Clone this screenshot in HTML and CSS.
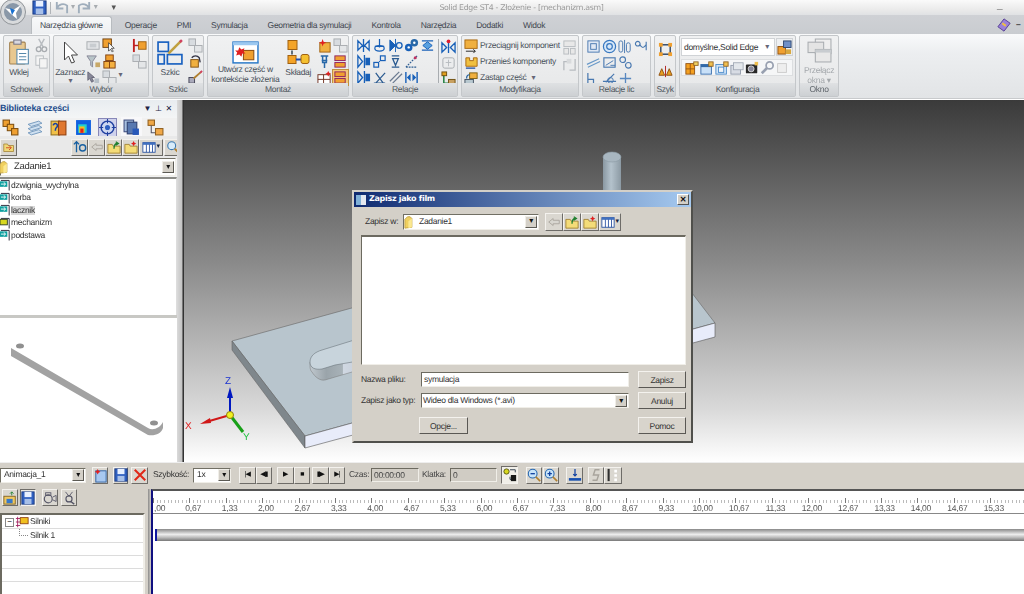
FILE: index.html
```html
<!DOCTYPE html>
<html lang="pl">
<head>
<meta charset="utf-8">
<title>Solid Edge ST4 - Złożenie - [mechanizm.asm]</title>
<link rel="stylesheet" href="styles.css">
</head>
<body>
<svg class="defs" width="0" height="0">
  <symbol id="clip" viewBox="0 0 20 26"><rect x="1" y="3" width="15" height="21" rx="1" fill="#e8c890" stroke="#a08050"/><rect x="5" y="1" width="7" height="4" fill="#d8d8e0" stroke="#778"/><rect x="8" y="10" width="11" height="14" fill="#fff" stroke="#58a"/><path d="M10 14h7M10 17h7M10 20h7" stroke="#58a"/></symbol>
  <symbol id="cut" viewBox="0 0 16 16"><path d="M5 1l5 9M11 1L6 10" stroke="#b8bcc0" stroke-width="1.5" fill="none"/><circle cx="5" cy="12" r="2.5" fill="none" stroke="#a8acb0" stroke-width="1.5"/><circle cx="11" cy="12" r="2.5" fill="none" stroke="#a8acb0" stroke-width="1.5"/></symbol>
  <symbol id="copy" viewBox="0 0 16 16"><rect x="2" y="2" width="8" height="10" fill="#f4f4f4" stroke="#b8bcc0"/><rect x="6" y="5" width="8" height="10" fill="#f4f4f4" stroke="#b8bcc0"/></symbol>
  <symbol id="cur" viewBox="0 0 16 24"><path d="M2 1v18l4-4 3 7 3-1-3-7h6z" fill="#fff" stroke="#444"/></symbol>
  <symbol id="gbox" viewBox="0 0 16 16"><rect x="1" y="4" width="13" height="8" fill="#e4e6e8" stroke="#a8acb0"/><rect x="4" y="6" width="7" height="4" fill="#c8ccd0"/></symbol>
  <symbol id="ocur" viewBox="0 0 16 16"><rect x="1" y="1" width="9" height="9" fill="#f0a030" stroke="#704010"/><path d="M7 5v9l2-2 2 3 1-1-2-3h3z" fill="#fff" stroke="#333" stroke-width=".8"/></symbol>
  <symbol id="funnel" viewBox="0 0 16 16"><path d="M1 2h10L7 8v6l-2-2V8z" fill="#b8c4c8" stroke="#889"/><rect x="10" y="9" width="5" height="5" fill="#c8a868"/></symbol>
  <symbol id="ostack" viewBox="0 0 16 16"><rect x="4" y="1" width="8" height="6" fill="#f0a030" stroke="#804010"/><rect x="2" y="8" width="12" height="7" fill="#f4b040" stroke="#804010"/><path d="M8 8v7" stroke="#804010"/></symbol>
  <symbol id="gcur" viewBox="0 0 16 16"><path d="M2 2v9l2-2 2 4 2-1-2-4h3z" fill="#889" stroke="#667"/><rect x="9" y="9" width="5" height="5" fill="#b8c0c8"/></symbol>
  <symbol id="gcube" viewBox="0 0 16 16"><rect x="1" y="1" width="7" height="7" fill="#d8dce0" stroke="#a8acb0"/><rect x="7" y="8" width="8" height="7" fill="#e4e6e8" stroke="#a8acb0"/></symbol>
  <symbol id="obar" viewBox="0 0 16 16"><path d="M2 1v14" stroke="#c02020" stroke-width="2"/><path d="M2 8h5" stroke="#c02020" stroke-width="1.5"/><rect x="7" y="4" width="8" height="8" fill="#f0a030" stroke="#a06010"/></symbol>
  <symbol id="sketch" viewBox="0 0 26 26"><rect x="1" y="3" width="10" height="9" fill="none" stroke="#1860c0" stroke-width="1.6"/><rect x="1" y="15" width="6" height="9" fill="none" stroke="#1860c0" stroke-width="1.6"/><rect x="10" y="15" width="14" height="9" fill="none" stroke="#1860c0" stroke-width="1.6"/><path d="M11 14L23 2" stroke="#c0a040" stroke-width="2.4"/><path d="M22 3l2-2" stroke="#d04060" stroke-width="2.4"/></symbol>
  <symbol id="orot" viewBox="0 0 16 16"><rect x="3" y="6" width="8" height="8" fill="#f0b040" stroke="#805010"/><path d="M4 4a5 5 0 0 1 8 0l1 5" fill="none" stroke="#334" stroke-width="1.4"/></symbol>
  <symbol id="pen" viewBox="0 0 16 16"><rect x="1" y="8" width="6" height="6" fill="#aab" stroke="#445"/><path d="M6 9l8-7" stroke="#b08030" stroke-width="2"/><path d="M13 3l2-2" stroke="#d04060" stroke-width="2"/></symbol>
  <symbol id="incontext" viewBox="0 0 26 22"><rect x="1" y="1" width="24" height="20" fill="#fff" stroke="#2878c8" stroke-width="1.4"/><rect x="1" y="1" width="24" height="3" fill="#9cc8f0"/><rect x="11" y="9" width="10" height="9" fill="#f0a030" stroke="#905010"/><path d="M7 6l2 2 3-1-1 3 2 2-3 0-1 3-2-2-3 1 1-3-2-2 3 0z" fill="#e02020"/></symbol>
  <symbol id="assemble" viewBox="0 0 24 26"><rect x="2" y="1" width="9" height="9" fill="#f4a428" stroke="#a06010"/><path d="M6 11v4" stroke="#345" stroke-width="1.5"/><rect x="2" y="16" width="8" height="8" fill="#f4a428" stroke="#a06010"/><path d="M10 20h5" stroke="#2050b0" stroke-width="2"/><rect x="15" y="15" width="8" height="9" rx="2" fill="#f4c030" stroke="#a06010"/></symbol>
  <symbol id="star" viewBox="0 0 16 16"><rect x="3" y="5" width="11" height="10" fill="#f0b040" stroke="#a06010"/><path d="M6 1l1 3 3 1-3 1-1 3-1-3-3-1 3-1z" fill="#e02020"/></symbol>
  <symbol id="pin" viewBox="0 0 16 16"><path d="M4 2h8M6 2v7h4V2M8 9v6M5 7h6" stroke="#2868a8" stroke-width="1.6" fill="none"/></symbol>
  <symbol id="gridstar" viewBox="0 0 16 16"><rect x="1" y="5" width="13" height="10" fill="#fff" stroke="#703020"/><path d="M7 5v10M1 10h13" stroke="#703020"/><path d="M12 1l1 2 2 1-2 1-1 2-1-2-2-1 2-1z" fill="#e02020"/></symbol>
  <symbol id="chain" viewBox="0 0 16 16"><rect x="2" y="2" width="11" height="5" fill="#f0a030" stroke="#902060"/><rect x="2" y="9" width="11" height="5" fill="#f0a030" stroke="#902060"/></symbol>
  <symbol id="rb1" viewBox="0 0 16 16"><path d="M2 3v10l5-5zM14 3v10l-5-5zM8 1v14" fill="none" stroke="#1860b8" stroke-width="1.4"/></symbol>
  <symbol id="rb2" viewBox="0 0 16 16"><path d="M8 1v9M3 9h10" stroke="#1860b8" stroke-width="1.3" fill="none"/><ellipse cx="8" cy="11" rx="5" ry="3" fill="none" stroke="#1860b8" stroke-width="1.3"/></symbol>
  <symbol id="rb3" viewBox="0 0 16 16"><path d="M2 2v12l6-6zM8 1v14" fill="#1860b8" stroke="#1860b8"/><circle cx="12" cy="8" r="3" fill="none" stroke="#1860b8" stroke-width="1.4"/></symbol>
  <symbol id="gear" viewBox="0 0 16 16"><circle cx="5" cy="10" r="4" fill="#1860b8"/><circle cx="11" cy="5" r="4" fill="#2868a8"/><circle cx="5" cy="10" r="1.3" fill="#fff"/><circle cx="11" cy="5" r="1.3" fill="#fff"/></symbol>
  <symbol id="rb5" viewBox="0 0 16 16"><path d="M2 3h12M2 13h12" stroke="#1860b8" stroke-width="1.4"/><path d="M3 8l5-4 5 4-5 4z" fill="#58a0e0" stroke="#1860b8"/></symbol>
  <symbol id="rb6" viewBox="0 0 16 16"><path d="M2 2v12l5-6zM9 1v14" fill="none" stroke="#1860b8" stroke-width="1.4"/><rect x="10" y="4" width="5" height="8" fill="#1860b8"/></symbol>
  <symbol id="rb7" viewBox="0 0 16 16"><rect x="2" y="9" width="5" height="5" fill="none" stroke="#1860b8" stroke-width="1.3"/><rect x="9" y="2" width="5" height="5" fill="none" stroke="#1860b8" stroke-width="1.3"/><path d="M7 9l2-2" stroke="#1860b8"/></symbol>
  <symbol id="rb8" viewBox="0 0 16 16"><path d="M4 2h8M4 14h8M5 5l3 7 3-7z" fill="none" stroke="#2a5a90" stroke-width="1.4"/></symbol>
  <symbol id="rb9" viewBox="0 0 16 16"><path d="M2 14L14 2M2 14h12" stroke="#2a5a90" stroke-width="1.2" stroke-dasharray="2 1"/><circle cx="12" cy="4" r="1.6" fill="#c03060"/></symbol>
  <symbol id="rb10" viewBox="0 0 16 16"><path d="M2 14h12M4 14L14 3M4 3l8 11" stroke="#2a5a90" stroke-width="1.3"/></symbol>
  <symbol id="rb11" viewBox="0 0 16 16"><path d="M2 12L12 2M5 14L15 4" stroke="#6a7a90" stroke-width="1.3"/></symbol>
  <symbol id="rb12" viewBox="0 0 16 16"><path d="M2 2v12M14 2v12" stroke="#1860b8" stroke-width="1.5"/><path d="M3 8l4-4v8zM13 8l-4-4v8z" fill="#1860b8"/></symbol>
  <symbol id="rred" viewBox="0 0 16 16"><path d="M1 4v10l5-5zM15 4v10l-5-5zM8 3v12" fill="none" stroke="#1860b8" stroke-width="1.4"/><circle cx="8" cy="2.5" r="2" fill="#e02030"/></symbol>
  <symbol id="gcal" viewBox="0 0 16 16"><rect x="2" y="3" width="12" height="11" rx="2" fill="none" stroke="#a8acb0"/><path d="M8 5v7M5 8h6" stroke="#b8bcc0"/></symbol>
  <symbol id="gtree" viewBox="0 0 16 16"><path d="M3 2v11h5" stroke="#208040" stroke-width="1.6" fill="none"/><rect x="1" y="1" width="5" height="4" fill="#e0a020" stroke="#705010"/><rect x="8" y="9" width="7" height="6" fill="#c8a060" stroke="#705010"/></symbol>
  <symbol id="drag" viewBox="0 0 16 16"><rect x="1" y="1" width="13" height="9" fill="#f0b040" stroke="#a86810"/><path d="M2 13h10l-2-2m2 2l-2 2" stroke="#222" fill="none"/></symbol>
  <symbol id="move" viewBox="0 0 16 16"><path d="M2 3h4v3h4V3h4v9H2z" fill="#f0c040" stroke="#a86810"/><path d="M2 14h10" stroke="#2050a0" stroke-width="1.4"/></symbol>
  <symbol id="replace" viewBox="0 0 16 16"><rect x="6" y="2" width="8" height="6" fill="#f0b040" stroke="#806010"/><rect x="1" y="9" width="9" height="6" fill="#b8c8d0" stroke="#405060"/><path d="M3 8a3 3 0 0 1 3-4" stroke="#2060a0" fill="none" stroke-width="1.3"/></symbol>
  <symbol id="gcomp" viewBox="0 0 16 16"><rect x="2" y="1" width="12" height="6" fill="#e8e8e8" stroke="#b8bcc0"/><rect x="2" y="9" width="5" height="6" fill="#e8e8e8" stroke="#b8bcc0"/><rect x="9" y="9" width="5" height="6" fill="#e8e8e8" stroke="#b8bcc0"/></symbol>
  <symbol id="gmv" viewBox="0 0 16 16"><path d="M2 14V5h4M14 2v12H8" stroke="#b8bcc0" fill="none" stroke-width="1.4"/><rect x="5" y="2" width="5" height="5" fill="#d8dadc"/></symbol>
  <symbol id="lb1" viewBox="0 0 16 16"><rect x="2" y="2" width="12" height="12" fill="#e0e8f4" stroke="#4878b0"/><rect x="5" y="5" width="6" height="6" fill="none" stroke="#4878b0"/></symbol>
  <symbol id="lb2" viewBox="0 0 16 16"><circle cx="8" cy="8" r="6.5" fill="#d8e8f8" stroke="#3878c0" stroke-width="1.3"/><circle cx="8" cy="8" r="3" fill="none" stroke="#3878c0" stroke-width="1.3"/></symbol>
  <symbol id="lb3" viewBox="0 0 16 16"><path d="M3 2a2 2 0 0 1 2 2v8a2 2 0 0 1-4 0V4a2 2 0 0 1 2-2zM11 4a2 2 0 0 1 2 2v6a2 2 0 0 1-4 0V6a2 2 0 0 1 2-2zM7 1v14" fill="none" stroke="#4878b0"/></symbol>
  <symbol id="lb4" viewBox="0 0 16 16"><circle cx="4" cy="5" r="2.5" fill="none" stroke="#4878b0" stroke-width="1.2"/><path d="M6 6c3 4 4 4 7 0M13 3v9" fill="none" stroke="#4878b0" stroke-width="1.2"/></symbol>
  <symbol id="lb5" viewBox="0 0 16 16"><path d="M1 10L14 4M2 13l13-6" stroke="#6898c8" stroke-width="1.2"/></symbol>
  <symbol id="lb6" viewBox="0 0 16 16"><rect x="2" y="3" width="12" height="10" fill="none" stroke="#4878b0" stroke-width="1.2"/><path d="M4 11l8-5M9 11h5" stroke="#4878b0"/></symbol>
  <symbol id="lb7" viewBox="0 0 16 16"><circle cx="5" cy="5" r="3" fill="none" stroke="#4878b0" stroke-width="1.2"/><circle cx="11" cy="11" r="3" fill="none" stroke="#4878b0" stroke-width="1.2"/></symbol>
  <symbol id="lb8" viewBox="0 0 16 16"><path d="M2 2v12h12M2 9h6v5" fill="none" stroke="#4878b0" stroke-width="1.3"/></symbol>
  <symbol id="lb9" viewBox="0 0 16 16"><path d="M1 11h14M13 3L4 12" stroke="#4878b0" stroke-width="1.2"/><circle cx="9" cy="10" r="3" fill="none" stroke="#4878b0"/></symbol>
  <symbol id="lb10" viewBox="0 0 16 16"><path d="M8 2v12M2 8h12" stroke="#5888c0" stroke-width="1.4"/></symbol>
  <symbol id="patsq" viewBox="0 0 16 16"><rect x="3" y="3" width="10" height="10" fill="none" stroke="#203858" stroke-width="1.4"/><rect x="1" y="1" width="4" height="4" fill="#f0a030"/><rect x="11" y="1" width="4" height="4" fill="#f0a030"/><rect x="1" y="11" width="4" height="4" fill="#f0a030"/><rect x="11" y="11" width="4" height="4" fill="#f0a030"/></symbol>
  <symbol id="mirror" viewBox="0 0 16 16"><path d="M8 2v12" stroke="#b02020"/><path d="M1 12l3-7 3 7zM9 12l3-7 3 7z" fill="#e8a020" stroke="#905010"/></symbol>
  <symbol id="cfg" viewBox="0 0 16 16"><rect x="1" y="7" width="8" height="8" fill="#f0a030" stroke="#905010"/><rect x="7" y="1" width="8" height="7" fill="#7090c8" stroke="#304870"/><rect x="9" y="10" width="6" height="5" fill="#d8a840"/></symbol>
  <symbol id="k1" viewBox="0 0 16 16"><rect x="1" y="3" width="10" height="12" fill="#f4a020" stroke="#905010"/><path d="M6 3v12M1 9h10" stroke="#905010"/><rect x="10" y="1" width="5" height="4" fill="#f0d060" stroke="#906020"/></symbol>
  <symbol id="k2" viewBox="0 0 16 16"><rect x="1" y="4" width="12" height="11" fill="#c8e0f8" stroke="#3068a8"/><rect x="1" y="4" width="12" height="3" fill="#3068a8"/><rect x="10" y="1" width="5" height="5" fill="#f0c050" stroke="#906020"/></symbol>
  <symbol id="k3" viewBox="0 0 16 16"><rect x="1" y="4" width="12" height="11" fill="#d0e4f8" stroke="#4888c8"/><rect x="4" y="7" width="6" height="6" fill="#f0f4f8" stroke="#4888c8"/><rect x="10" y="1" width="5" height="5" fill="#f0c050" stroke="#906020"/></symbol>
  <symbol id="k4" viewBox="0 0 16 16"><rect x="1" y="5" width="11" height="10" fill="#d8dce4" stroke="#9098a8"/><rect x="4" y="2" width="11" height="8" fill="#e4e8ec" stroke="#a0a8b4"/></symbol>
  <symbol id="k5" viewBox="0 0 16 16"><rect x="1" y="4" width="13" height="10" rx="1" fill="#282828"/><circle cx="7" cy="9" r="3.4" fill="#889" stroke="#ddd"/><rect x="11" y="1" width="4" height="4" fill="#f0c050"/></symbol>
  <symbol id="k6" viewBox="0 0 16 16"><circle cx="11" cy="5" r="4" fill="none" stroke="#98a0b0" stroke-width="2"/><path d="M8 8l-6 6" stroke="#98a0b0" stroke-width="3"/></symbol>
  <symbol id="k7" viewBox="0 0 16 16"><rect x="3" y="3" width="10" height="10" fill="#eee" stroke="#c8c8c8"/></symbol>
  <symbol id="win" viewBox="0 0 24 24"><rect x="8" y="1" width="15" height="14" fill="#eee" stroke="#a8acb0"/><rect x="1" y="4" width="15" height="10" fill="#e4e4e4" stroke="#a8acb0"/><rect x="8" y="11" width="15" height="12" fill="#e8e8e8" stroke="#a8acb0"/><rect x="8" y="11" width="15" height="3" fill="#c8ccd0"/></symbol>
  <symbol id="cascade" viewBox="0 0 16 16"><rect x="1" y="1" width="6" height="6" fill="#f0a030" stroke="#805010"/><rect x="5" y="5" width="6" height="6" fill="#f4b040" stroke="#805010"/><rect x="9" y="9" width="6" height="6" fill="#f0a030" stroke="#805010"/></symbol>
  <symbol id="sheets" viewBox="0 0 16 16"><path d="M2 5l10-3 3 2-10 3zM2 9l10-3 3 2-10 3zM2 13l10-3 3 2-10 3z" fill="#cfe0f0" stroke="#6890b8" stroke-width=".8"/></symbol>
  <symbol id="quest" viewBox="0 0 16 16"><rect x="1" y="2" width="8" height="13" fill="#f0c048" stroke="#907020"/><rect x="8" y="2" width="7" height="13" fill="#e07830" stroke="#904010"/><path d="M3 6a2 2 0 1 1 3 2c-1 1-1 1-1 3" stroke="#1840a0" fill="none" stroke-width="1.4"/></symbol>
  <symbol id="heat" viewBox="0 0 16 16"><rect x="1" y="1" width="14" height="14" fill="#1060e0"/><rect x="3" y="5" width="8" height="8" fill="#20d0d0"/><rect x="4" y="7" width="5" height="6" fill="#f0c020"/><rect x="5" y="9" width="3" height="4" fill="#e02020"/></symbol>
  <symbol id="target" viewBox="0 0 16 16"><circle cx="8" cy="8" r="6" fill="#cfd8f0" stroke="#2040a0" stroke-width="1.4"/><circle cx="8" cy="8" r="2.4" fill="#3060c0"/><path d="M8 0v4M8 12v4M0 8h4M12 8h4" stroke="#2040a0"/></symbol>
  <symbol id="docs" viewBox="0 0 16 16"><rect x="1" y="1" width="9" height="11" fill="#a8c0e0" stroke="#405080"/><rect x="4" y="3" width="9" height="11" fill="#5878b0" stroke="#304070"/><rect x="9" y="9" width="6" height="6" fill="#2858b8"/></symbol>
  <symbol id="otree" viewBox="0 0 16 16"><rect x="1" y="1" width="6" height="5" fill="#f0a848" stroke="#906020"/><path d="M4 6v7h4" stroke="#556" fill="none"/><rect x="8" y="9" width="7" height="6" fill="#f0a848" stroke="#906020"/></symbol>
  <symbol id="openf" viewBox="0 0 16 16"><path d="M1 4h5l1 2h7v8H1z" fill="#f0d878" stroke="#a08030"/><path d="M4 9h7m-3-3l3 3-3 3" stroke="#d03010" fill="none"/></symbol>
  <symbol id="info" viewBox="0 0 16 16"><path d="M4 2v12M1 5l3-3 3 3" stroke="#1860a0" stroke-width="1.5" fill="none"/><circle cx="11" cy="9" r="3.5" fill="none" stroke="#1860a0" stroke-width="1.6"/></symbol>
  <symbol id="back" viewBox="0 0 16 16"><path d="M2 8l5-4v2h7v4H7v2z" fill="#d8d6d0" stroke="#a8a49c"/></symbol>
  <symbol id="fup" viewBox="0 0 16 16"><path d="M1 5h5l1 2h8v8H1z" fill="#f4dc78" stroke="#a08030"/><path d="M8 10c0-4 2-6 4-6m-2-2l3 2-3 2" stroke="#208030" fill="none" stroke-width="1.5"/></symbol>
  <symbol id="fnew" viewBox="0 0 16 16"><path d="M1 5h5l1 2h8v8H1z" fill="#f4dc78" stroke="#a08030"/><path d="M11 1l1 2 2 1-2 1-1 2-1-2-2-1 2-1z" fill="#e02020"/></symbol>
  <symbol id="view" viewBox="0 0 16 16"><rect x="1" y="3" width="14" height="11" fill="#fff" stroke="#2850a0"/><rect x="1" y="3" width="14" height="2.5" fill="#4070c0"/><path d="M5 5v9M8.500 5v9M12 5v9" stroke="#2850a0"/></symbol>
  <symbol id="search" viewBox="0 0 16 16"><circle cx="6.500" cy="6.500" r="4.500" fill="#d8ecfa" stroke="#3878b0" stroke-width="1.2"/><path d="M10 10l5 5" stroke="#b08030" stroke-width="2.2"/></symbol>
  <symbol id="folder" viewBox="0 0 16 16"><path d="M1 15V5l3-3h3l2 2v10z" fill="#f0d060" stroke="#c0a040"/><path d="M5 15V7l4-3v10z" fill="#fbe890"/></symbol>
  <symbol id="part" viewBox="0 0 12 12"><path d="M1 1h9v11" fill="none" stroke="#223"/><rect x="0" y="2" width="8" height="6" fill="#10a0a0"/><path d="M1 5h5m-2-2l2 2-2 2" stroke="#fff" fill="none"/></symbol>
  <symbol id="asm" viewBox="0 0 12 12"><path d="M1 1h9v11" fill="none" stroke="#223"/><rect x="0" y="2" width="8" height="6" fill="#d8d820" stroke="#304020"/></symbol>
  <symbol id="motor" viewBox="0 0 16 16"><path d="M3 2v12M1 4h5M1 8h5M1 12h5" stroke="#a02060"/><rect x="6" y="3" width="9" height="7" fill="#f0c020" stroke="#904010"/></symbol>
  <symbol id="newanim" viewBox="0 0 16 16"><rect x="3" y="3" width="11" height="12" fill="#a8c8f0" stroke="#3060a0"/><path d="M5 1l1 2 2 1-2 1-1 2-1-2-2-1 2-1z" fill="#e02020"/></symbol>
  <symbol id="save" viewBox="0 0 16 16"><rect x="1" y="1" width="14" height="14" fill="#3060c0" stroke="#183880"/><rect x="4" y="1" width="8" height="6" fill="#e8f0ff"/><rect x="4" y="9" width="8" height="6" fill="#a8c0e8"/></symbol>
  <symbol id="del" viewBox="0 0 16 16"><path d="M2 2l12 12M14 2L2 14" stroke="#e02818" stroke-width="2.4"/></symbol>
  <symbol id="opena" viewBox="0 0 16 16"><rect x="1" y="6" width="13" height="9" fill="#f0c860" stroke="#806020"/><rect x="4" y="9" width="7" height="5" fill="#3878c8"/><path d="M10 1v4m-2-2l2-2 2 2" stroke="#208030" fill="none"/></symbol>
  <symbol id="filt" viewBox="0 0 16 16"><circle cx="6" cy="9" r="4.500" fill="none" stroke="#556" stroke-width="1.3"/><rect x="3" y="2" width="6" height="3" fill="none" stroke="#556"/><path d="M11 7l4-2v7l-4-2" fill="none" stroke="#556"/></symbol>
  <symbol id="filt2" viewBox="0 0 16 16"><path d="M4 1l4 5M12 1L8 6" stroke="#556"/><circle cx="8" cy="9" r="3.500" fill="none" stroke="#556" stroke-width="1.3"/><path d="M10 12l4 3" stroke="#556" stroke-width="1.6"/></symbol>
  <symbol id="ctrl" viewBox="0 0 16 16"><circle cx="4" cy="4" r="3" fill="#d8d820" stroke="#505010"/><path d="M8 2h6v3M14 13H8v-3" stroke="#203040" fill="none"/><rect x="9" y="8" width="6" height="7" fill="#181818"/></symbol>
  <symbol id="zminus" viewBox="0 0 16 16"><circle cx="6.500" cy="6.500" r="5" fill="#c8e4fa" stroke="#2868b0" stroke-width="1.2"/><path d="M4 6.500h5" stroke="#1040a0" stroke-width="1.5"/><path d="M10 10l5 5" stroke="#b08030" stroke-width="2"/></symbol>
  <symbol id="zplus" viewBox="0 0 16 16"><circle cx="6.500" cy="6.500" r="5" fill="#c8e4fa" stroke="#2868b0" stroke-width="1.2"/><path d="M4 6.500h5M6.500 4v5" stroke="#1040a0" stroke-width="1.5"/><path d="M10 10l5 5" stroke="#b08030" stroke-width="2"/></symbol>
  <symbol id="fit" viewBox="0 0 16 16"><path d="M8 1v8m-2-2l2 2 2-2" stroke="#1040a0" fill="none" stroke-width="1.4"/><path d="M1 13h14" stroke="#1850b0" stroke-width="3"/></symbol>
  <symbol id="gs" viewBox="0 0 16 16"><path d="M12 2H7L5 8h6l-2 6H4" fill="none" stroke="#a8a49c" stroke-width="1.6"/></symbol>
  <symbol id="gbar" viewBox="0 0 16 16"><path d="M3 1v14" stroke="#303030" stroke-width="2.4"/><path d="M11 2v3M11 7v3M11 12v3" stroke="#fff" stroke-width="3"/></symbol>
  <symbol id="undo" viewBox="0 0 16 16"><path d="M3 2v7h7M3 9a7 7 0 0 1 11-3v8" fill="none" stroke="#a0aebc" stroke-width="2"/></symbol>
  <symbol id="redo" viewBox="0 0 16 16"><path d="M13 2v7H6M13 9A7 7 0 0 0 2 6v8" fill="none" stroke="#a0aebc" stroke-width="2"/></symbol>
  <symbol id="help" viewBox="0 0 16 16"><path d="M8 1l7 5-7 9-7-5z" fill="#9a80d8" stroke="#503890"/><path d="M6 6l4 3" stroke="#f0c040" stroke-width="2.4"/></symbol>
  <linearGradient id="postgrad" x1="0" x2="1" y1="0" y2="0"><stop offset="0" stop-color="#8a98a2"/><stop offset=".45" stop-color="#b4c2cc"/><stop offset="1" stop-color="#8c9aa4"/></linearGradient>
  <linearGradient id="wallgrad" x1="0" x2="1" y1="0" y2="0"><stop offset="0" stop-color="#c0c8ce"/><stop offset=".3" stop-color="#9aa4aa"/><stop offset=".6" stop-color="#a8b2b8"/><stop offset=".62" stop-color="#d0d8e2"/><stop offset="1" stop-color="#c4ccd8"/></linearGradient>
</svg>

<div class="app">
  <header class="titlebar">
    <div class="logo"><svg viewBox="0 0 26 26" width="26" height="26"><circle cx="13" cy="13" r="12.500" fill="#d8dadc" stroke="#909498"/><circle cx="13" cy="13" r="9" fill="#8a98a8"/><path d="M5 9l8 2 8-5-5 8 1 6-6-5z" fill="#fff"/><path d="M10 9l5 2-3 5z" fill="#1870d0"/></svg></div>
    <div class="qat">
      <svg class="i16"><use href="#save"/></svg>
      <span class="qsep"></span>
      <svg class="i16"><use href="#undo"/></svg><span class="qcaret">▾</span>
      <svg class="i16"><use href="#redo"/></svg><span class="qcaret">▾</span>
      <span class="qmore">▾</span>
    </div>
    <div class="apptitle">Solid Edge ST4 - Złożenie - [mechanizm.asm]</div>
    <div class="winbtn">_</div>
  </header>

  <nav class="tabs">
    <span class="tab active">Narzędzia główne</span>
    <span class="tab first">Operacje</span>
    <span class="tab">PMI</span>
    <span class="tab">Symulacja</span>
    <span class="tab">Geometria dla symulacji</span>
    <span class="tab">Kontrola</span>
    <span class="tab">Narzędzia</span>
    <span class="tab">Dodatki</span>
    <span class="tab">Widok</span>
    <span class="tabend"><svg class="i13"><use href="#help"/></svg><span class="dash">–</span></span>
  </nav>

  <section class="ribbon">
    <div class="group g-clip">
      <div class="gbody">
        <div class="big w-wklej"><svg class="bigic s-clip"><use href="#clip"/></svg><span>Wklej</span></div>
        <div class="col"><svg class="i16"><use href="#cut"/></svg><svg class="i16"><use href="#copy"/></svg></div>
      </div>
      <div class="glabel">Schowek</div>
    </div>
    <div class="group g-sel">
      <div class="gbody">
        <div class="big w-zazn"><svg class="bigic s-cur"><use href="#cur"/></svg><span>Zaznacz</span><span class="caret">▾</span></div>
        <div class="col"><svg class="i16"><use href="#gbox"/></svg><svg class="i16"><use href="#funnel"/></svg><svg class="i16"><use href="#gcur"/></svg></div>
        <div class="col"><svg class="i16"><use href="#ocur"/></svg><svg class="i16"><use href="#ostack"/></svg><svg class="i16"><use href="#gcube"/></svg></div>
        <div class="col caretcol"><span class="caret">▾</span></div>
        <div class="col"><svg class="i16"><use href="#obar"/></svg><svg class="i16"><use href="#gcube"/></svg></div>
      </div>
      <div class="glabel">Wybór</div>
    </div>
    <div class="group g-sk">
      <div class="gbody">
        <div class="big w-szkic"><svg class="bigic s-sk"><use href="#sketch"/></svg><span>Szkic</span></div>
        <div class="col"><svg class="i16"><use href="#gcube"/></svg><svg class="i16"><use href="#orot"/></svg><svg class="i16"><use href="#pen"/></svg></div>
      </div>
      <div class="glabel">Szkic</div>
    </div>
    <div class="group g-mont">
      <div class="gbody">
        <div class="big w-ctx"><svg class="bigic s-ctx"><use href="#incontext"/></svg><span>Utwórz część w<br>kontekście złożenia</span></div>
        <div class="big w-skl"><svg class="bigic s-skl"><use href="#assemble"/></svg><span>Składaj</span></div>
        <div class="col"><svg class="i16"><use href="#star"/></svg><svg class="i16"><use href="#pin"/></svg><svg class="i16"><use href="#gridstar"/></svg></div>
        <div class="col"><svg class="i16"><use href="#gcube"/></svg><svg class="i16"><use href="#chain"/></svg><svg class="i16 hot"><use href="#chain"/></svg></div>
      </div>
      <div class="glabel">Montaż</div>
    </div>
    <div class="group g-rel">
      <div class="gbody relbody">
        <div class="relgrid">
          <svg class="i16"><use href="#rb1"/></svg><svg class="i16"><use href="#rb2"/></svg><svg class="i16"><use href="#rb3"/></svg><svg class="i16"><use href="#gear"/></svg><svg class="i16"><use href="#rb5"/></svg>
          <svg class="i16"><use href="#rb6"/></svg><svg class="i16"><use href="#rb7"/></svg><svg class="i16"><use href="#rb8"/></svg><svg class="i16"><use href="#rb9"/></svg><span></span>
          <svg class="i16"><use href="#rb6"/></svg><svg class="i16"><use href="#rb10"/></svg><svg class="i16"><use href="#rb11"/></svg><svg class="i16"><use href="#rb12"/></svg><span></span>
        </div>
        <span class="vsep"></span>
        <div class="col"><svg class="i16"><use href="#rred"/></svg><svg class="i16"><use href="#gcal"/></svg><svg class="i16"><use href="#gtree"/></svg></div>
      </div>
      <div class="glabel">Relacje</div>
    </div>
    <div class="group g-mod">
      <div class="gbody modbody">
        <div class="modrows">
          <div class="modrow"><svg class="i16"><use href="#drag"/></svg>Przeciągnij komponent</div>
          <div class="modrow"><svg class="i16"><use href="#move"/></svg>Przenieś komponenty</div>
          <div class="modrow"><svg class="i16"><use href="#replace"/></svg>Zastąp część <span class="caret">▾</span></div>
        </div>
        <div class="col"><svg class="i16"><use href="#gcomp"/></svg><svg class="i16"><use href="#gmv"/></svg></div>
      </div>
      <div class="glabel">Modyfikacja</div>
    </div>
    <div class="group g-lic">
      <div class="gbody licgrid">
        <svg class="i16"><use href="#lb1"/></svg><svg class="i16"><use href="#lb2"/></svg><svg class="i16"><use href="#lb3"/></svg><svg class="i16"><use href="#lb4"/></svg>
        <svg class="i16"><use href="#lb5"/></svg><svg class="i16"><use href="#lb6"/></svg><svg class="i16"><use href="#lb7"/></svg><span></span>
        <svg class="i16"><use href="#lb8"/></svg><svg class="i16"><use href="#lb9"/></svg><svg class="i16"><use href="#lb10"/></svg><span></span>
      </div>
      <div class="glabel">Relacje lic</div>
    </div>
    <div class="group g-szyk">
      <div class="gbody szykbody"><svg class="i16"><use href="#patsq"/></svg><svg class="i16"><use href="#mirror"/></svg></div>
      <div class="glabel">Szyk</div>
    </div>
    <div class="group g-konf">
      <div class="gbody konfbody">
        <div class="konfrow"><div class="konfcombo">domyślne,Solid Edge<span class="caret">▾</span></div><span class="konfbtn"><svg class="i16"><use href="#cfg"/></svg></span></div>
        <div class="konfbar">
          <svg class="i16"><use href="#k1"/></svg><svg class="i16"><use href="#k2"/></svg><svg class="i16"><use href="#k3"/></svg><svg class="i16"><use href="#k4"/></svg><svg class="i16"><use href="#k5"/></svg><svg class="i16"><use href="#k6"/></svg><svg class="i16"><use href="#k7"/></svg>
        </div>
      </div>
      <div class="glabel">Konfiguracja</div>
    </div>
    <div class="group g-okno">
      <div class="gbody">
        <div class="big w-okno"><svg class="bigic s-win"><use href="#win"/></svg><span>Przełącz<br>okna ▾</span></div>
      </div>
      <div class="glabel">Okno</div>
    </div>
  </section>

  <main class="main">
    <aside class="library">
      <div class="libhead"><span class="libtitle">Biblioteka części</span><span class="libctl">▼&nbsp; ⊥&nbsp; ✕</span></div>
      <div class="libicons">
        <svg class="i18"><use href="#cascade"/></svg><svg class="i18"><use href="#sheets"/></svg><svg class="i18"><use href="#quest"/></svg><svg class="i18"><use href="#heat"/></svg><span class="libact"><svg class="i18"><use href="#target"/></svg></span><span class="libsel"><svg class="i18"><use href="#docs"/></svg></span><svg class="i18"><use href="#otree"/></svg>
      </div>
      <div class="libtools">
        <span class="tbtn t-open"><svg class="i12"><use href="#openf"/></svg></span>
        <span class="toolgroup">
          <span class="tbtn"><svg class="i14"><use href="#info"/></svg></span><span class="tbtn"><svg class="i14"><use href="#back"/></svg></span><span class="tbtn"><svg class="i14"><use href="#fup"/></svg></span><span class="tbtn"><svg class="i14"><use href="#fnew"/></svg></span><span class="tbtn wide"><svg class="i14"><use href="#view"/></svg><span class="tcaret">▾</span></span>
        </span>
        <span class="tbtn t-search"><svg class="i14"><use href="#search"/></svg></span>
      </div>
      <div class="libcombo combo"><svg class="i14"><use href="#folder"/></svg><span class="combotext">Zadanie1</span><span class="ddbtn">▾</span></div>
      <ul class="parts">
        <li><svg class="i12"><use href="#part"/></svg>dzwignia_wychylna</li>
        <li><svg class="i12"><use href="#part"/></svg>korba</li>
        <li class="sel"><svg class="i12"><use href="#part"/></svg><span>lacznik</span></li>
        <li><svg class="i12"><use href="#asm"/></svg>mechanizm</li>
        <li><svg class="i12"><use href="#part"/></svg>podstawa</li>
      </ul>
      <div class="preview">
        <svg viewBox="0 0 177 144" width="177" height="144">
          <path d="M11 30L148 110c5 3 12 0 15-6v6c-2 6-8 8-15 7L11 38z" fill="#a2a2a2"/>
          <ellipse cx="20" cy="28" rx="4" ry="2.500" fill="#909090"/>
          <ellipse cx="154" cy="105" rx="4" ry="2.500" fill="#909090"/>
        </svg>
      </div>
    </aside>
    <div class="vsplit"></div>
    <div class="viewport">
      <svg class="scene" viewBox="0 0 840 362" width="840" height="362">
        <path d="M419 57v38h18V57z" fill="url(#postgrad)"/>
        <ellipse cx="428" cy="57" rx="9" ry="5" fill="#a8b6c0" stroke="#8a98a2" stroke-width=".6"/>
        <path d="M415 92h26v6h-26z" fill="#a4aeb4"/>
        <path d="M48 241L458 128 531 223 121 336z" fill="#b8c5cd" stroke="#666" stroke-width=".6"/>
        <path d="M48 241L121 336V348L48 250z" fill="#7f878c" stroke="#666" stroke-width=".6"/>
        <path d="M121 336L531 223V237L121 348z" fill="#e8ecfa" stroke="#555" stroke-width=".6"/>
        <path d="M126 262c0 6 0 8 2 10 3 5 8 9 13 8l27-8h12v-20l-42 8z" fill="url(#wallgrad)" stroke="#777" stroke-width=".5"/>
        <path d="M126 262c0-6 5-10 12-12l42-13v23l-29 5-13 4c-7 1-12-1-12-7z" fill="#c8d4dc" stroke="#6c767c" stroke-width=".6"/>
      </svg>
      <svg class="triad" viewBox="0 0 70 76" width="70" height="76">
        <path d="M46 48V26" stroke="#0018c0" stroke-width="2"/><path d="M46 20l-3 11h6z" fill="#0018c0"/>
        <path d="M46 48L22 55" stroke="#d01818" stroke-width="2"/><path d="M16 57l10-6 1 5z" fill="#d01818"/>
        <path d="M46 48l13 17" stroke="#18a018" stroke-width="3"/>
        <circle cx="46" cy="48" r="3.500" fill="#f0f020" stroke="#908010"/>
        <text x="41" y="17" class="tz">Z</text><text x="1" y="62" class="tx">X</text><text x="59" y="73" class="ty">Y</text>
      </svg>
    </div>

    <div class="dialog">
      <div class="dlgtitle"><span class="dlgicon"></span><span class="dlgname">Zapisz jako film</span><span class="dlgclose">✕</span></div>
      <div class="dlgtop">
        <label class="lblw">Zapisz w:</label>
        <div class="combo dlgcombo"><svg class="i14"><use href="#folder"/></svg><span class="combotext">Zadanie1</span><span class="ddbtn">▾</span></div>
        <span class="dlgtools">
          <span class="tbtn"><svg class="i14"><use href="#back"/></svg></span><span class="tbtn"><svg class="i14"><use href="#fup"/></svg></span><span class="tbtn"><svg class="i14"><use href="#fnew"/></svg></span><span class="tbtn wide"><svg class="i14"><use href="#view"/></svg><span class="tcaret">▾</span></span>
        </span>
      </div>
      <div class="filelist"></div>
      <div class="dlgform">
        <label>Nazwa pliku:</label><div class="field">symulacja</div><button class="btn" type="button">Zapisz</button>
        <label>Zapisz jako typ:</label><div class="field tight">Wideo dla Windows (*.avi)<span class="ddbtn">▾</span></div><button class="btn" type="button">Anuluj</button>
        <span></span><div class="optrow"><button class="btn opt" type="button">Opcje...</button></div><button class="btn" type="button">Pomoc</button>
      </div>
    </div>
  </main>

  <section class="anim">
    <div class="animbar">
      <div class="combo animcombo"><span class="combotext">Animacja_1</span><span class="ddbtn">▾</span></div>
      <span class="tbtn a1"><svg class="i16"><use href="#newanim"/></svg></span><span class="tbtn a2"><svg class="i14"><use href="#save"/></svg></span><span class="tbtn a3"><svg class="i14"><use href="#del"/></svg></span>
      <label class="speedlbl">Szybkość:</label>
      <div class="combo speedcombo"><span class="combotext">1x</span><span class="ddbtn">▾</span></div>
      <span class="player">
        <span class="pgrp"><span class="pbtn">|◀</span><span class="pbtn">◀▮</span></span>
        <span class="pgrp"><span class="pbtn">▶</span><span class="pbtn">■</span></span>
        <span class="pgrp"><span class="pbtn">▮▶</span><span class="pbtn">▶|</span></span>
      </span>
      <label class="czas">Czas:</label><div class="ro rotime">00:00:00</div>
      <label class="klatka">Klatka:</label><div class="ro roframe">0</div>
      <span class="tbtn pressed"><svg class="i14"><use href="#ctrl"/></svg></span>
      <span class="tbtn z1"><svg class="i14"><use href="#zminus"/></svg></span><span class="tbtn z1b"><svg class="i14"><use href="#zplus"/></svg></span>
      <span class="tbtn z2"><svg class="i14"><use href="#fit"/></svg></span>
      <span class="tbtn z3"><svg class="i14"><use href="#gs"/></svg></span><span class="tbtn z4"><svg class="i14"><use href="#gbar"/></svg></span>
    </div>
    <div class="animbody">
      <div class="animleft">
        <div class="animtools">
          <span class="tbtn b"><svg class="i14"><use href="#opena"/></svg></span><span class="tbtn b pressedb"><svg class="i14"><use href="#save"/></svg></span><span class="tbtn b g"><svg class="i14"><use href="#filt"/></svg></span><span class="tbtn b"><svg class="i14"><use href="#filt2"/></svg></span>
        </div>
        <div class="tree">
          <div class="trow"><span class="minus">−</span><svg class="i14"><use href="#motor"/></svg><span>Silniki</span></div>
          <div class="trow child"><span class="elbow"></span><span>Silnik 1</span></div>
          <div class="trow"></div><div class="trow"></div><div class="trow"></div>
        </div>
      </div>
      <div class="vsplit2"></div>
      <div class="timeline">
        <div class="ruler">
          <div class="ticks"></div>
          <div class="labels">
            <span class="l0">,00</span><span>0,67</span><span>1,33</span><span>2,00</span><span>2,67</span><span>3,33</span><span>4,00</span><span>4,67</span><span>5,33</span><span>6,00</span><span>6,67</span><span>7,33</span><span>8,00</span><span>8,67</span><span>9,33</span><span>10,00</span><span>10,67</span><span>11,33</span><span>12,00</span><span>12,67</span><span>13,33</span><span>14,00</span><span>14,67</span><span>15,33</span>
          </div>
        </div>
        <div class="tracks">
          <div class="track"></div>
          <div class="track"><div class="bar"></div></div>
        </div>
      </div>
    </div>
  </section>
</div>
</body>
</html>
```
FILE: styles.css
```css
* { box-sizing: border-box; }
html, body { margin: 0; height: 100%; overflow: hidden; background: #fff; }
body { font: 8.5px/1.1 "Liberation Sans", Arial, sans-serif; letter-spacing: -.3px; color: #333; text-rendering: geometricPrecision; }
.defs { position: absolute; }
.app { width: 1024px; height: 594px; display: flex; flex-direction: column; overflow: hidden; position: relative; filter: blur(.3px); }
svg { display: block; flex: none; }
.i12 { width: 12px; height: 12px; }
.i13 { width: 14px; height: 14px; }
.i14 { width: 14px; height: 14px; }
.i16 { width: 15px; height: 15px; }
.i18 { width: 17px; height: 17px; }

/* title */
.titlebar { height: 15px; display: flex; background: linear-gradient(#fafafa, #e9e9e9 70%, #e0e2e4); position: relative; }
.logo { position: absolute; left: 0; top: -1px; z-index: 3; }
.qat { display: flex; align-items: center; margin-left: 32px; gap: 2px; width: 165px; height: 15px; }
.qsep { width: 1px; height: 12px; background: #b0b4b8; margin: 0 1px; }
.qcaret { color: #a8acb0; font-size: 8px; margin: 0; }
.qmore { margin-left: 12px; font-size: 9px; color: #555; }
.apptitle { flex: 1; text-align: center; color: #9a9a9a; font-family: "DejaVu Sans", sans-serif; font-size: 7.8px; line-height: 15px; padding-right: 164px; padding-left: 14px; white-space: nowrap; }
.winbtn { width: 28px; color: #777; line-height: 12px; font-size: 10px; padding-left: 1px; }

/* tabs */
.tabs { height: 19px; display: flex; align-items: flex-end; background: linear-gradient(#cfd1d5, #c9ccd0); padding-left: 31px; color: #3f4650; position: relative; }
.tab { height: 17px; line-height: 16px; padding: 0 10px; white-space: nowrap; }
.tab.active { background: linear-gradient(#f8f9fa, #eef0f2); padding: 0 8px; border-radius: 3px 3px 0 0; border: 1px solid #b8bcc0; border-bottom: 0; height: 18px; margin-right: 3px; }
.tabend { margin-left: auto; display: flex; align-items: center; gap: 5px; height: 19px; width: 27px; }
.dash { font-weight: bold; color: #333; }

/* ribbon */
.ribbon { height: 65px; display: flex; gap: 3px; padding: 1px 0 1px 3px; background: linear-gradient(#f9fafb, #eceef0 30%, #e2e4e6); border-bottom: 1px solid #c8cacc; }
.group { display: flex; flex-direction: column; border: 1px solid #c4c7ca; border-radius: 2px; background: linear-gradient(#f0f1f2, #e6e7e8); }
.gbody { flex: 1; display: flex; min-height: 0; }
.glabel { height: 13px; line-height: 13px; text-align: center; background: linear-gradient(#dfe1e3, #cdd0d3); color: #4e555c; white-space: nowrap; }
.g-clip { width: 47px; } .g-sel { width: 96px; } .g-sk { width: 52px; } .g-mont { width: 142px; }
.g-rel { width: 106px; } .g-mod { width: 118px; } .g-lic { width: 69px; } .g-szyk { width: 22px; }
.g-konf { width: 117px; } .g-okno { width: 40px; }
.big { display: flex; flex-direction: column; align-items: center; text-align: center; color: #48505a; white-space: nowrap; line-height: 9px; }
.big span { display: block; }
.bigic { margin: 4px 0 3px; }
.caret { font-size: 8px; color: #667; line-height: 8px; }
.col { display: flex; flex-direction: column; gap: 1px; padding-top: 2px; }
.w-wklej { width: 33px; } .s-clip { width: 22px; height: 27px; margin-top: 3px; margin-bottom: 2px; }
.w-zazn { width: 37px; } .s-cur { width: 17px; height: 24px; margin-bottom: 3px; margin-top: 5px; }
.g-sel .col { margin-right: 1px; }
.caretcol { width: 12px; justify-content: flex-end; padding-bottom: 4px; }
.g-sel .col:last-child { margin-left: 2px; }
.w-szkic { width: 34px; } .s-sk { width: 27px; height: 27px; margin-top: 3px; margin-bottom: 2px; }
.g-sk .col { margin-left: 1px; }
.w-ctx { width: 78px; padding-left: 1px; line-height: 9.5px; } .s-ctx { width: 27px; height: 23px; margin-bottom: 1px; margin-top: 5px; }
.w-skl { width: 33px; margin-left: 1px; } .s-skl { width: 24px; height: 27px; margin-top: 3px; margin-bottom: 2px; }
.g-mont .col { margin-left: 1px; width: 16px; }
.g-mont .col:nth-child(3) { margin-left: 3px; }
.hot { background: #f4c878; outline: 1px solid #c09040; }
.relbody { padding: 1px 0 0 2px; }
.relgrid { display: grid; grid-template-columns: repeat(5, 16px); grid-auto-rows: 16px; align-items: center; justify-items: center; width: 81px; }
.vsep { width: 1px; height: 46px; margin: 2px 0 0 2px; background: #a8acb0; }
.g-rel .col { margin-left: 2px; }
.modbody { padding: 2px 0 0 2px; justify-content: space-between; }
.modrow { display: flex; align-items: center; gap: 1px; height: 16px; white-space: nowrap; color: #48505a; }
.modrows .caret { margin-left: 4px; }
.g-mod .col { margin-right: 1px; gap: 2px; }
.licgrid { display: grid; grid-template-columns: repeat(4, 16px); grid-auto-rows: 16px; padding: 2px 0 0 2px; align-items: center; justify-items: center; }
.szykbody { flex-direction: column; align-items: center; gap: 7px; padding-top: 6px; }
.konfbody { flex-direction: column; padding: 2px 2px 0 1px; gap: 3px; }
.konfrow { display: flex; gap: 1px; height: 18px; }
.konfcombo { flex: 1; background: #fff; border: 1px solid #d0d3d6; line-height: 16px; padding: 0 5px 0 2px; color: #333; display: flex; justify-content: space-between; white-space: nowrap; align-items: center; }
.konfbtn { width: 17px; display: flex; align-items: center; justify-content: center; background: #eef0f2; border: 1px solid #d0d3d6; }
.konfbar { display: flex; justify-content: space-between; background: #f5f6f7; border: 1px solid #dcdee0; padding: 0 3px; height: 17px; align-items: center; }
.konfbar svg { width: 14px; height: 14px; }
.w-okno { width: 38px; color: #a4a8ac; line-height: 10px; } .s-win { width: 25px; height: 25px; margin-top: 2px; margin-bottom: 2px; }
.g-okno .glabel { color: #60666c; }

/* main */
.main { height: 362px; display: flex; position: relative; margin-top: 1px; }
.library { width: 177px; display: flex; flex-direction: column; background: #f1f1f1; }
.libhead { height: 18px; flex: none; display: flex; justify-content: space-between; align-items: center; padding: 0 5px 0 0; background: linear-gradient(#e8ecf0, #f4f5f6); }
.libtitle { font-weight: bold; color: #1c4c8c; font-size: 9px; white-space: nowrap; letter-spacing: -.2px; }
.libctl { color: #224; font-size: 8px; white-space: nowrap; }
.libicons { display: grid; grid-template-columns: repeat(7, 24.3px); height: 18px; flex: none; justify-items: center; align-items: center; margin-left: -2px; }
.libact { background: #cfd2ec; outline: 1px solid #8888b8; }
.libsel { background: #f8f8fa; outline: 2px solid #f8f8fa; }
.libtools { height: 22px; flex: none; display: flex; align-items: center; background: #e9e9e9; }
.t-open { margin-right: 54px; width: 14px; }
.toolgroup { display: flex; }
.t-search { margin-left: 1px; width: 16px; }
.tbtn { width: 17px; height: 17px; display: inline-flex; align-items: center; justify-content: center; background: #dad7d0; border: 1px solid; border-color: #f4f2ee #6e6c68 #6e6c68 #f4f2ee; flex: none; }
.tbtn.wide { width: 24px; }
.tcaret { font-size: 7px; color: #124; }
.combo { display: flex; align-items: center; background: #fff; border: 1px solid; border-color: #716f64 #f0eee8 #f0eee8 #716f64; }
.combotext { flex: 1; padding-left: 3px; color: #333; white-space: nowrap; }
.ddbtn { width: 12px; height: 12px; display: flex; align-items: center; justify-content: center; background: #d4d0c8; border: 1px solid; border-color: #f0eee8 #5c5a54 #5c5a54 #f0eee8; font-size: 8px; color: #111; flex: none; margin-right: 1px; }
.libcombo { height: 18px; flex: none; margin-right: 1px; }
.libcombo svg { margin-left: -2px; }
.libcombo .combotext { padding-left: 1px; font-size: 9.5px; }
.parts { list-style: none; margin: 1px 0 0; padding: 0; height: 138px; flex: none; background: #fff; border-top: 2px solid #8c8c88; border-right: 1px solid #ddd; }
.parts li { display: flex; align-items: center; height: 12.5px; color: #333; white-space: nowrap; }
.parts li svg { width: 11px; }
.parts .sel span { background: #d8d8d8; }
.preview { flex: 1; background: #fff; border-top: 3px solid #c8c8c4; }
.vsplit { width: 7px; background: linear-gradient(90deg, #dadada, #c4c4c4 70%, #333 86%); }
.viewport { flex: 1; position: relative; background: linear-gradient(#3a3a3a, #8a8a8a 45%, #d8d8d8 85%, #fff); overflow: hidden; }
.scene { position: absolute; left: 0; top: 0; }
.triad { position: absolute; left: 0; top: 267px; }
.tz { fill: #1830d0; font: 10px "Liberation Sans", sans-serif; }
.tx { fill: #e02020; font: 10px "Liberation Sans", sans-serif; }
.ty { fill: #20c040; font: 10px "Liberation Sans", sans-serif; }

/* dialog */
.dialog { position: absolute; left: 352px; top: 90px; width: 341px; height: 253px; background: #d4d0c8; border: 2px solid; border-color: #d4d0c8 #50504c #50504c #d4d0c8; display: flex; flex-direction: column; }
.dlgtitle { height: 15px; flex: none; display: flex; align-items: center; background: linear-gradient(90deg, #0f2a70, #a6caf0); color: #fff; padding: 0 1px 0 2px; font-weight: bold; font-size: 8px; font-family: "DejaVu Sans", sans-serif; }
.dlgicon { width: 10px; height: 10px; background: linear-gradient(90deg, #7fb0d8 50%, #e4e8f0 50%); margin-right: 3px; }
.dlgname { flex: 1; }
.dlgclose { width: 12px; height: 11px; background: #d4d0c8; color: #111; font-size: 8px; line-height: 9px; text-align: center; border: 1px solid; border-color: #fff #555 #555 #fff; font-family: "Liberation Sans", sans-serif; margin-right: 1px; }
.dlgtop { height: 26px; flex: none; display: flex; align-items: center; padding: 3px 0 0 11px; }
.lblw { width: 38px; flex: none; color: #333; white-space: nowrap; }
.dlgcombo { width: 136px; height: 16px; flex: none; }
.dlgcombo .combotext { padding-left: 1px; }
.dlgtools { display: flex; margin-left: 6px; }
.dlgtools .tbtn { width: 18px; height: 18px; }
.dlgtools .tbtn.wide { width: 22px; }
.filelist { height: 130px; flex: none; margin: 2px 5px 0 7px; background: #fff; border: 1px solid; border-color: #6c6a60 #f0eee8 #f0eee8 #6c6a60; border-width: 2px 1px 1px 1px; }
.dlgform { display: grid; grid-template-columns: 60px 208px 57px; grid-template-rows: 21px 21px 29px; padding: 4px 0 0 7px; align-items: center; }
.dlgform label { color: #333; white-space: nowrap; }
.field { height: 15px; background: #fff; border: 1px solid; border-color: #6c6a60 #f0eee8 #f0eee8 #6c6a60; line-height: 13px; padding-left: 2px; color: #333; display: flex; justify-content: space-between; align-items: center; width: 208px; }
.field.tight { padding-left: 1px; }
.dlgform .btn { margin-left: 9px; }
.btn { width: 48px; height: 17px; background: #d8d4cc; font: 8.5px "Liberation Sans", sans-serif; letter-spacing: -.3px; color: #333; border: 1px solid; border-color: #f4f2ee #5a5854 #5a5854 #f4f2ee; padding: 0; text-rendering: geometricPrecision; }
.dlgform .btn.opt { margin-left: -2px; width: 49px; }

/* animation */
.anim { flex: 1; background: #d4d0c8; display: flex; flex-direction: column; }
.animbar { height: 27px; flex: none; display: flex; align-items: center; padding-bottom: 2px; border-top: 1px solid #eee; }
.animcombo { width: 86px; height: 15px; margin-right: 6px; flex: none; }
.a1 { width: 16px; }
.a2 { width: 15px; margin-left: 5px; }
.a3 { width: 17px; margin-left: 3px; }
.speedlbl { margin-left: 5px; width: 36px; flex: none; color: #333; white-space: nowrap; }
.speedcombo { width: 38px; height: 15px; flex: none; margin-left: 4px; }
.speedcombo .ddbtn { margin-right: 0; }
.player { display: flex; margin-left: 8px; }
.pgrp { display: flex; margin-right: 5px; }
.pgrp:nth-child(2) { margin-right: 2px; }
.pgrp:last-child { margin-right: 0; }
.pbtn { width: 16.5px; height: 17px; display: flex; align-items: center; justify-content: center; font-size: 7px; color: #111; background: #d8d4cc; border: 1px solid; border-color: #f4f2ee #6e6c68 #6e6c68 #f4f2ee; letter-spacing: -1px; }
.czas { margin-left: 4px; width: 22px; flex: none; color: #444; }
.ro { height: 14px; background: #d0ccc4; border: 1px solid; border-color: #6c6a60 #f0eee8 #f0eee8 #6c6a60; line-height: 12px; padding-left: 2px; color: #444; flex: none; }
.rotime { width: 48px; }
.klatka { margin-left: 3px; width: 28px; flex: none; color: #444; }
.roframe { width: 47px; }
.tbtn.pressed { background: #f1efe9; border-color: #6e6c68 #f4f2ee #f4f2ee #6e6c68; width: 17px; height: 18px; margin-left: 4px; }
.z1 { margin-left: 8px; width: 16px; }
.z1b { margin-left: 1px; width: 16px; }
.z2 { margin-left: 7px; width: 17px; }
.z3 { margin-left: 5px; width: 16px; }
.z4 { width: 18px; }
.animbody { flex: 1; display: flex; min-height: 0; }
.animleft { width: 145px; display: flex; flex-direction: column; }
.animtools { height: 24px; flex: none; display: flex; align-items: flex-start; padding-left: 2px; gap: 1px; }
.tbtn.b { width: 16px; height: 17px; }
.tbtn.pressedb { background: #ece9e2; border-color: #6e6c68 #f4f2ee #f4f2ee #6e6c68; margin-left: 1px; }
.tbtn.g { margin-left: 5px; }
.tbtn.g + .b { margin-left: 2px; }
.tree { flex: 1; background: #fff; border: 1px solid; border-color: #6c6a60 #f0eee8 #fff #6c6a60; border-width: 2px 2px 0 2px; padding-top: 1px; }
.trow { height: 13.3px; display: flex; align-items: center; border-bottom: 1px solid #dcdcdc; color: #333; padding-left: 3px; gap: 1px; }
.minus { width: 9px; height: 9px; border: 1px solid #888; line-height: 6px; text-align: center; font-size: 8px; color: #111; }
.trow.child { padding-left: 17px; gap: 2px; }
.elbow { width: 9px; height: 7px; border: 1px dotted #888; border-width: 0 0 1px 1px; margin-top: -6px; }
.vsplit2 { width: 6px; background: linear-gradient(90deg, #d4d0c8 50%, #8a8a8a 50%, #d4d0c8); }
.timeline { flex: 1; background: #fff; border-left: 2px solid #101080; border-top: 2px solid #555; min-width: 0; overflow: hidden; }
.ruler { height: 23px; background: #fff; border-bottom: 1px solid #888; overflow: hidden; }
.ticks { height: 5px; margin-top: 7px; background: repeating-linear-gradient(90deg, #777 0 1px, transparent 1px 36.4px), repeating-linear-gradient(90deg, #bbb 0 1px, transparent 1px 3.64px) 0 2px / auto 3px no-repeat; }
.labels { display: flex; font-size: 8.5px; letter-spacing: -.2px; color: #555; white-space: nowrap; padding-top: 1px; }
.labels span { flex: 0 0 36.4px; text-align: center; }
.labels .l0 { flex-basis: 22px; text-align: left; padding-left: 1px; }
.track { height: 12px; }
.tracks { background: #fff; padding-top: 3px; }
.track .bar { height: 12px; margin-left: 2px; background: linear-gradient(#888, #ededed 45%, #bdbdbd 70%, #777); border-left: 2px solid #1018a0; }
```
